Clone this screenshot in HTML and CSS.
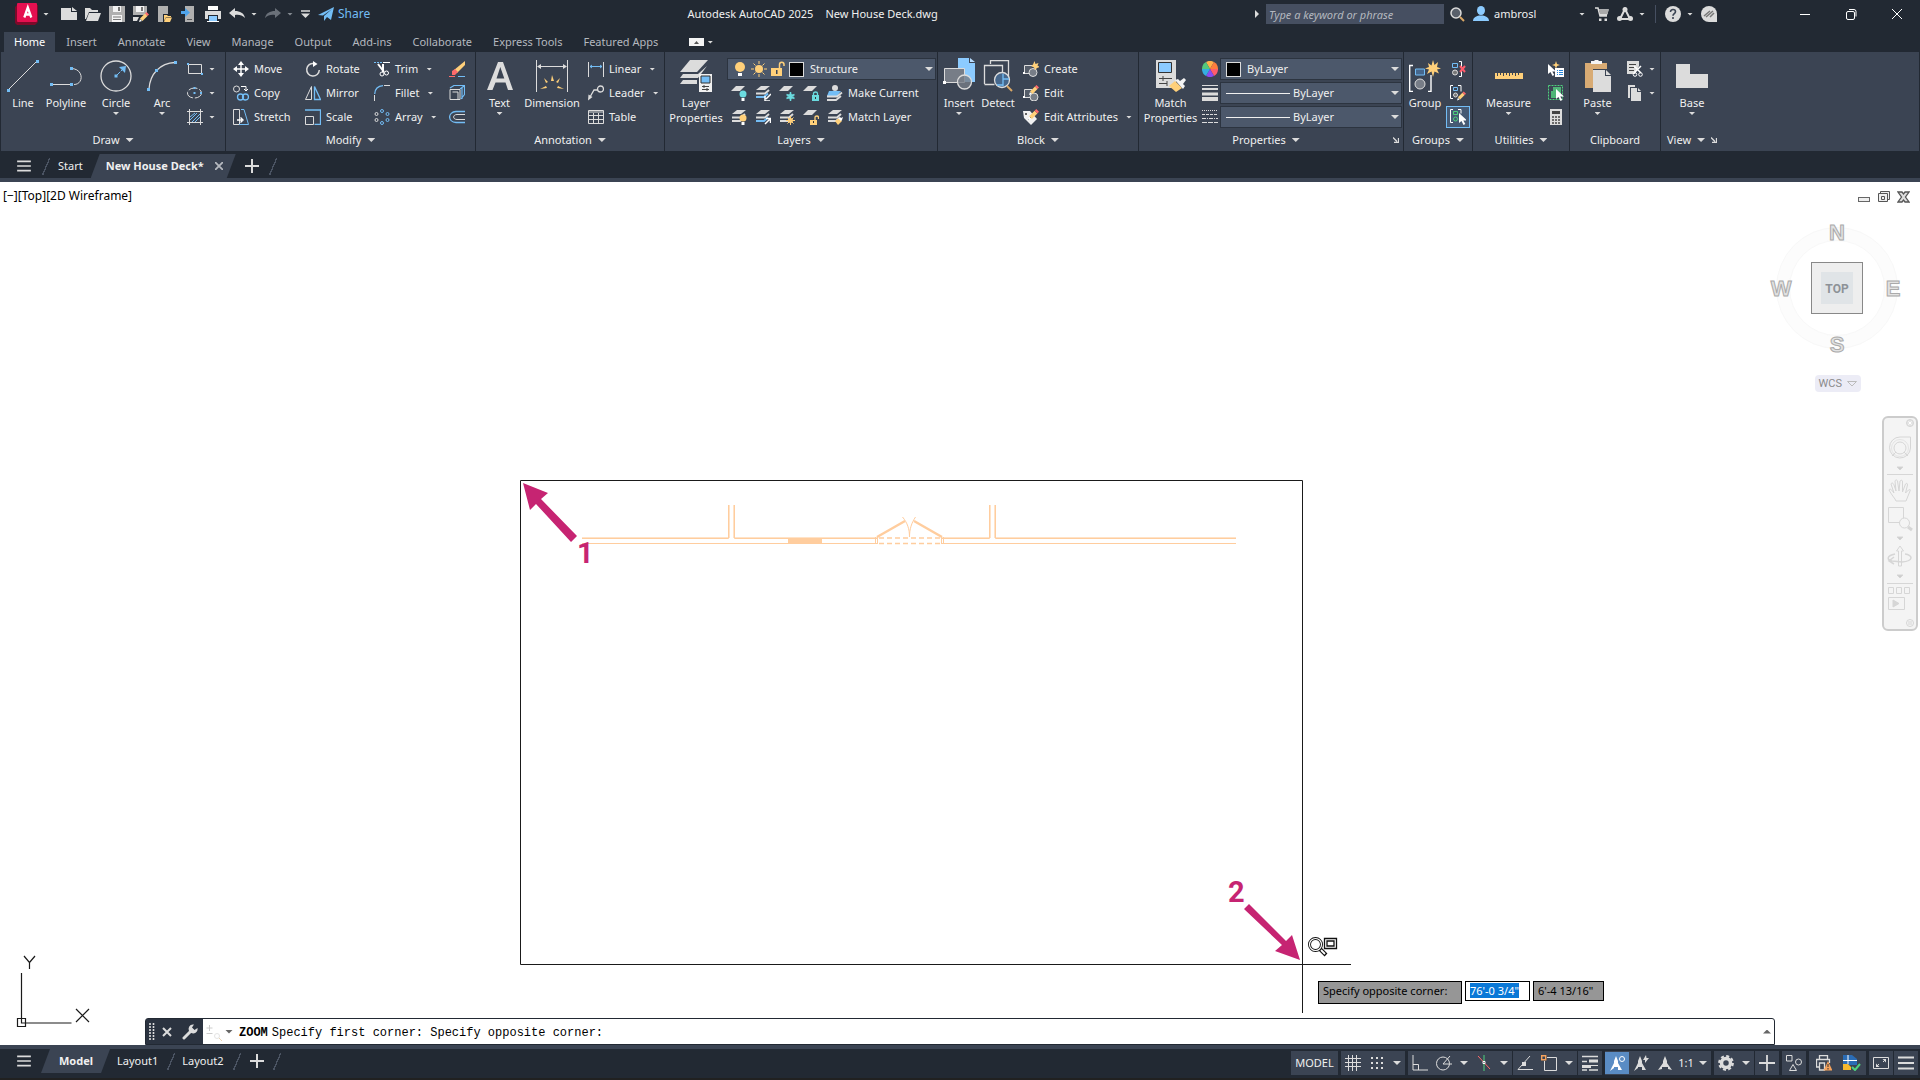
FILE: index.html
```html
<!DOCTYPE html>
<html lang="en">
<head>
    <meta charset="UTF-8">
    <meta name="viewport" content="width=device-width, initial-scale=1.0">
    <title>Autodesk AutoCAD 2025 - New House Deck.dwg</title>
    <link rel="stylesheet" href="styles.css">
</head>
<body>
    <!-- Shared icon parts -->
    <svg class="defs" aria-hidden="true">
        <symbol id="menu" viewBox="0 0 16 14"><path d="M0 1.5h16M0 7h16M0 12.5h16" stroke="#dcdcdc" stroke-width="2"/></symbol>
        <symbol id="plus" viewBox="0 0 14 14"><path d="M7 0v14M0 7h14" stroke="#dcdcdc" stroke-width="2"/></symbol>
        <symbol id="sheets" viewBox="0 0 16 16">
            <path d="M6 1h9l-5 4H1z" fill="#dcdcdc"/>
            <path d="M1 8.5h9l4-3.5" fill="none" stroke="#dcdcdc" stroke-width="2"/>
            <path d="M1 12h8l3-2.5" fill="none" stroke="#dcdcdc" stroke-width="2"/>
        </symbol>
        <symbol id="sheets-blue" viewBox="0 0 16 16">
            <path d="M6 1h9l-5 4H1z" fill="#dcdcdc"/>
            <path d="M1 8.5h9l4-3.5" fill="none" stroke="#dcdcdc" stroke-width="2"/>
            <path d="M1 12h8l4-3.5" fill="none" stroke="#73bdf5" stroke-width="2"/>
        </symbol>
        <symbol id="sheet" viewBox="0 0 16 16"><path d="M5 1h9L9 6H0z" fill="#dcdcdc"/></symbol>
        <symbol id="pencil" viewBox="0 0 10 10"><path d="M0 10l1-3 2 2z" fill="#fff"/><path d="M1 6.5l5-5 2.500 2.500-5 5z" fill="#ffd07a"/><path d="M6 1.5L7.5 0 10 2.5 8.5 4z" fill="#ff6b6b"/></symbol>
        <symbol id="cursor" viewBox="0 0 8 12"><path d="M0 0v10l2.5-2 2 4 1.8-1-2-3.5H8z" fill="#fff"/></symbol>
        <symbol id="launch" viewBox="0 0 6 6"><path d="M0 .5l4 4M5.5 1v4.5H1" stroke="#dcdcdc" stroke-width="1.3" fill="none"/></symbol>
    </svg>

    <!-- Title bar -->
    <header class="titlebar">
        <div class="quick-access">
            <button class="app-button" aria-label="Application menu">
                <svg width="24" height="22" viewBox="0 0 24 22"><path d="M3 1l20 1v17l-3 3H2l-2-2V4z" fill="#7d0a2a"/><rect x="2" y="0" width="20" height="19" rx="1" fill="#e51050"/><path d="M9.3 14.5L12.8 4.500l3.500 10M10.500 11.500h4.600" fill="none" stroke="#fff" stroke-width="2.300"/></svg>
                <i class="caret"></i>
            </button>
            <button aria-label="New"><svg width="16" height="16"><path d="M0 2h10v4h6v8H0z" fill="#dcdcdc"/><path d="M11 1l5 4h-5z" fill="#dcdcdc"/></svg></button>
            <button aria-label="Open"><svg width="16" height="16"><path d="M0 2h5l2 2h6v2H4l-3 7H0z" fill="#dcdcdc"/><path d="M4 7h12l-3 8H1z" fill="#dcdcdc"/></svg></button>
            <button aria-label="Save"><svg width="16" height="16"><path d="M0 0h16v16H0z" fill="#b0b0b0"/><path d="M4 0h8v6H4zM3 9h10v7H3z" fill="#f4f4f4"/><path d="M9 1h2v4H9z" fill="#777"/><path d="M4 11h8M4 13.5h8" stroke="#777"/></svg></button>
            <button aria-label="Save as"><svg width="16" height="16"><path d="M0 0h14v9H0z" fill="#b0b0b0"/><path d="M3 0h8v6H3z" fill="#f4f4f4"/><path d="M8 1h2v4H8z" fill="#777"/><path d="M0 11h6l-2 4H0z" fill="#dcdcdc"/><use href="#pencil" x="6" y="6" width="10" height="10"/></svg></button>
            <button aria-label="Open from web"><svg width="16" height="16"><path d="M1 0h10v8H6v8H1z" fill="#b0b0b0"/><path d="M7 9h3l1 1h3v1H9l-2 4zM9 11.5h6L13 16H7z" fill="#ffd07a"/></svg></button>
            <button aria-label="Save to web"><svg width="16" height="16"><path d="M4 0h9v16H4z" fill="#b0b0b0"/><path d="M6 13h5v1H6z" fill="#555"/><path d="M0 5h4V2l5 4.5L4 11V8H0z" fill="#4ea3ea"/></svg></button>
            <button aria-label="Plot"><svg width="16" height="16"><path d="M3 0h10v4H3z" fill="#fff"/><path d="M0 5h16v8h-3V9H3v4H0z" fill="#dcdcdc"/><path d="M4 10h8v6H4z" fill="#8ccbff"/><path d="M2 15h12v1H2z" fill="#fff"/></svg></button>
            <button class="with-caret" aria-label="Undo"><svg width="16" height="16"><path d="M0 7l6-5v3c5 0 9 2 10 7-3-3-6-3.5-10-3v3z" fill="#dcdcdc"/></svg><i class="caret"></i></button>
            <button class="with-caret dim" aria-label="Redo"><svg width="16" height="16"><path d="M16 7l-6-5v3C5 5 1 7 0 12c3-3 6-3.5 10-3v3z" fill="#6a7079"/></svg><i class="caret"></i></button>
            <button aria-label="Customize"><svg width="9" height="8"><path d="M0 1h9" stroke="#dcdcdc" stroke-width="1.5"/><path d="M0 3.5h9L4.5 8z" fill="#dcdcdc"/></svg></button>
            <button class="share"><svg width="16" height="14"><path d="M0 8L16 0l-3 13-4-3-3 4V9l8-7-9 6.5z" fill="#73bdf5"/></svg>Share</button>
        </div>
        <h1 class="app-title"><span>Autodesk AutoCAD 2025</span><span>New House Deck.dwg</span></h1>
        <div class="info-center">
            <i class="caret-right"></i>
            <input type="text" placeholder="Type a keyword or phrase" aria-label="Search help">
            <button aria-label="Search"><svg width="15" height="15"><circle cx="6" cy="6" r="5" fill="#59606b" stroke="#dcdcdc" stroke-width="1.5"/><path d="M10 10l4 4" stroke="#d9a766" stroke-width="2"/></svg></button>
            <button class="user"><svg width="16" height="16"><ellipse cx="8" cy="4.5" rx="4" ry="4.5" fill="#8ccbff"/><path d="M0 15c0-4 4-5 6-5.5h4c2 .5 6 1.5 6 5.5z" fill="#8ccbff"/></svg>ambrosl<i class="caret"></i></button>
            <button aria-label="App store"><svg width="14" height="14"><path d="M0 1h3l2 8h7M4 3h9l-1.5 4.5H5" fill="none" stroke="#dcdcdc" stroke-width="1.5"/><path d="M4 3h9v4H5z" fill="#aaa"/><path d="M4 11.5h2.5V14H4zM9.5 11.5H12V14H9.5z" fill="#dcdcdc"/></svg></button>
            <button class="with-caret" aria-label="Autodesk apps"><svg width="16" height="14"><path d="M8 2L3 12h10z" fill="none" stroke="#dcdcdc" stroke-width="2"/><circle cx="8" cy="2.5" r="2.5" fill="#dcdcdc"/><circle cx="2.5" cy="11.5" r="2.5" fill="#dcdcdc"/><circle cx="13.5" cy="11.5" r="2.5" fill="#dcdcdc"/></svg><i class="caret"></i></button>
            <span class="divider"></span>
            <button class="with-caret" aria-label="Help"><svg width="16" height="16"><circle cx="8" cy="8" r="8" fill="#dcdcdc"/><path d="M5.5 6c0-3.5 5-3 5-.3 0 1.8-2.5 2-2.5 4M8 11v2" fill="none" stroke="#3b4453" stroke-width="1.6"/></svg><i class="caret"></i></button>
            <button aria-label="Autodesk"><svg width="16" height="16"><path d="M8 0a8 8 0 0 1 8 8v8H8A8 8 0 0 1 8 0z" fill="#dcdcdc"/><path d="M3 10l6-5M5 11l7-6M9 11l4-4" stroke="#777" stroke-width="1.5"/></svg></button>
        </div>
        <div class="window-buttons">
            <button aria-label="Minimize"><svg width="10" height="10"><path d="M0 5.5h10" stroke="#fff"/></svg></button>
            <button aria-label="Restore"><svg width="11" height="11" fill="none" stroke="#fff"><rect x=".5" y="2.5" width="8" height="8" rx="1.5"/><path d="M3 .5h5a2 2 0 0 1 2 2v5"/></svg></button>
            <button aria-label="Close"><svg width="10" height="10"><path d="M0 0l10 10M10 0L0 10" stroke="#fff"/></svg></button>
        </div>
    </header>

    <!-- Ribbon tabs -->
    <nav class="ribbon-tabs">
        <a href="#" class="active">Home</a>
        <a href="#">Insert</a>
        <a href="#">Annotate</a>
        <a href="#">View</a>
        <a href="#">Manage</a>
        <a href="#">Output</a>
        <a href="#">Add-ins</a>
        <a href="#">Collaborate</a>
        <a href="#">Express Tools</a>
        <a href="#">Featured Apps</a>
        <button aria-label="Minimize ribbon"><svg width="15" height="8"><path d="M0 0h15v8H0z" fill="#f4f4f4"/><path d="M5 6l2.5-3L10 6z" fill="#555"/></svg><i class="caret"></i></button>
    </nav>

    <!-- Ribbon -->
    <section class="ribbon">
        <div class="panel draw">
            <div class="panel-body">
                <button class="big"><svg width="32" height="32"><path d="M2 29L29 2" stroke="#dcdcdc" fill="none"/><path d="M0 29h3v3H0zM29 0h3v3h-3z" fill="#73bdf5"/></svg>Line</button>
                <button class="big"><svg width="32" height="32" fill="none"><path d="M2 24.5h19M21 8.500c13 0 13 16 3 16" stroke="#dcdcdc"/><path d="M0 23h3v3H0zM20 23h3v3h-3zM20 7h3v3h-3z" fill="#73bdf5"/></svg>Polyline</button>
                <button class="big"><svg width="32" height="32" fill="none"><circle cx="16" cy="16" r="15" stroke="#dcdcdc" stroke-width="1.3"/><path d="M16 16l8-8" stroke="#73bdf5" stroke-dasharray="6 1"/><path d="M19 7l7-1-1 7z" fill="#73bdf5"/><path d="M14.5 14.5h3v3h-3z" fill="#73bdf5"/></svg>Circle<i class="caret"></i></button>
                <button class="big"><svg width="32" height="32" fill="none"><path d="M3 29C4 14 14 3 29 2.5" stroke="#dcdcdc" stroke-width="1.3"/><path d="M1 28h3v3H1zM9 9h3v3H9zM28 1h3v3h-3z" fill="#73bdf5"/></svg>Arc<i class="caret"></i></button>
                <div class="rows">
                    <button aria-label="Rectangle"><svg width="16" height="16" fill="none"><path d="M1.5 3.5h13v9h-13z" stroke="#dcdcdc"/><path d="M0 2h2v2H0zM14 12h2v2h-2z" fill="#73bdf5"/></svg><i class="caret"></i></button>
                    <button aria-label="Ellipse"><svg width="16" height="16" fill="none"><ellipse cx="7.5" cy="8" rx="7" ry="5" stroke="#dcdcdc" stroke-dasharray="9 2"/><path d="M6.5 7h2v2h-2zM13 7h2v2h-2zM6.5 2h2v2h-2z" fill="#73bdf5"/></svg><i class="caret"></i></button>
                    <button aria-label="Hatch"><svg width="16" height="16" fill="none"><path d="M3 11l7-7M3 8l5-4M5 13l8-8M8 13l5-5" stroke="#73bdf5"/><path d="M2.5 0v16M13.5 0v16M0 2.5h16M0 13.5h16" stroke="#dcdcdc"/></svg><i class="caret"></i></button>
                </div>
            </div>
            <button class="panel-title">Draw<i class="caret wide"></i></button>
        </div>

        <div class="panel modify">
            <div class="panel-body">
                <div class="rows">
                    <button><svg width="16" height="16" fill="#fff"><path d="M7.3 2h1.4v12H7.3zM2 7.3h12v1.4H2z"/><path d="M8 0l3 4H5zM8 16l3-4H5zM0 8l4-3v6zM16 8l-4-3v6z"/></svg>Move</button>
                    <button><svg width="16" height="16" fill="none"><circle cx="3.5" cy="4" r="3" stroke="#dcdcdc"/><path d="M8 1.5h5v4M11 4l2 2 2-2" stroke="#fff"/><circle cx="7.5" cy="12" r="3" stroke="#73bdf5" stroke-width="1.3"/><circle cx="12.5" cy="12" r="3" stroke="#73bdf5" stroke-width="1.3"/></svg>Copy</button>
                    <button><svg width="16" height="16" fill="none"><path d="M.5.5h6v15h-6z" stroke="#dcdcdc"/><path d="M8 .5h3l4.500 15H6" stroke="#73bdf5"/><path d="M4 11h5M7.5 8.5L10 11l-2.5 2.5" stroke="#fff" stroke-width="1.4"/></svg>Stretch</button>
                </div>
                <div class="rows">
                    <button><svg width="16" height="16" fill="none"><path d="M9 2.5A6.3 6.3 0 1 0 14.3 9" stroke="#dcdcdc" stroke-width="1.5"/><path d="M8 0l4.5 3L8 6z" fill="#fff"/></svg>Rotate</button>
                    <button><svg width="16" height="16" fill="none"><path d="M6.5 1.5v13h-6z" stroke="#dcdcdc"/><path d="M9.5 1.5v13h6z" stroke="#73bdf5" stroke-width="1.3"/></svg>Mirror</button>
                    <button><svg width="16" height="16" fill="none"><path d="M0 1h15.500v14.500h-6" stroke="#73bdf5" stroke-width="1.3"/><path d="M.5 7.5h8v8h-8z" stroke="#dcdcdc"/></svg>Scale</button>
                </div>
                <div class="rows">
                    <button><svg width="16" height="16" fill="none"><path d="M0 1.5h8" stroke="#73bdf5" stroke-dasharray="2 1"/><path d="M9 1.5h7" stroke="#fff"/><path d="M4 3l6 8M9 3v8" stroke="#fff" stroke-width="2"/><circle cx="8" cy="13" r="2" stroke="#fff"/><circle cx="12.5" cy="12" r="2" stroke="#fff"/></svg>Trim<i class="caret"></i></button>
                    <button><svg width="16" height="16" fill="none"><path d="M.7 9C1 4 4 1 9 .7" stroke="#73bdf5" stroke-width="1.3"/><path d="M.5 10v6M10 .5h6" stroke="#dcdcdc"/></svg>Fillet<i class="caret"></i></button>
                    <button><svg width="16" height="16" fill="none" stroke="#73bdf5"><circle cx="8" cy="2" r="1.5"/><circle cx="13.5" cy="5" r="1.5"/><circle cx="13.5" cy="11" r="1.5"/><circle cx="8" cy="14" r="1.5"/><g stroke="#dcdcdc"><circle cx="2.5" cy="5" r="1.5"/><circle cx="2.5" cy="11" r="1.5"/></g></svg>Array<i class="caret"></i></button>
                </div>
                <div class="rows">
                    <button aria-label="Erase"><svg width="16" height="16" fill="none"><path d="M5 9L16 0v4l-8 8z" fill="#ffd07a"/><path d="M3 10l3-2 3 3-3 3H3z" fill="#ff6b6b"/><path d="M0 15.5h6" stroke="#ff6b6b"/><path d="M9 15.5h7" stroke="#73bdf5"/></svg></button>
                    <button aria-label="Explode"><svg width="16" height="16" fill="none"><path d="M1 4.5h10v10H1zM3.5 7h5.5v7" stroke="#dcdcdc"/><path d="M1 3l4-2.5h10.500v9L12 14M11 4l4-3M13 3v11" stroke="#73bdf5" stroke-width="1.2"/></svg></button>
                    <button aria-label="Offset"><svg width="16" height="16" fill="none"><path d="M16 2.5H7C-1.5 3-1.5 13 7 13.5h9" stroke="#73bdf5" stroke-width="1.3"/><path d="M16 5.5H8c-4.5 0-4.5 5 0 5h8" stroke="#dcdcdc"/></svg></button>
                </div>
            </div>
            <button class="panel-title">Modify<i class="caret wide"></i></button>
        </div>

        <div class="panel annotation">
            <div class="panel-body">
                <button class="big"><svg width="32" height="32"><path d="M14 2h5l10 28h-5l-2.5-7.5H11.5L8.5 30H3zm2.3 5L12.5 18.5h7.800z" fill="#dcdcdc"/></svg>Text<i class="caret"></i></button>
                <button class="big"><svg width="32" height="32" fill="none"><path d="M.5 0v32M31.5 0v32M2 6.5h28" stroke="#dcdcdc"/><path d="M1 6.5L5 4v5zM31 6.5L27 4v5z" fill="#dcdcdc"/><path d="M16 15l2 6h-3zM8 18l4 4-2 1zM24 18l-4 4 2 1zM4 29l6-3 1 2zM28 29l-6-3-1 2z" fill="#ffd07a"/></svg>Dimension</button>
                <div class="rows">
                    <button><svg width="16" height="16" fill="none"><path d="M.5 1v15M15.5 1v15" stroke="#dcdcdc"/><path d="M2 5.5h12M4 4L2 5.5 4 7M12 4l2 1.5L12 7" stroke="#73bdf5"/></svg>Linear<i class="caret"></i></button>
                    <button><svg width="16" height="16" fill="none"><circle cx="12.5" cy="4" r="3" stroke="#dcdcdc" stroke-width="1.3"/><path d="M9.500 5L6 5 2 12" stroke="#dcdcdc" stroke-width="1.3"/><path d="M0 15.5l.5-6 4 2.5z" fill="#dcdcdc"/></svg>Leader<i class="caret"></i></button>
                    <button><svg width="16" height="16" fill="none"><path d="M.5 1.5h15v13H.5zM.5 3h15M.5 6.5h15M.5 10.5h15M5.5 4v11M10.5 4v11" stroke="#dcdcdc"/></svg>Table</button>
                </div>
            </div>
            <button class="panel-title">Annotation<i class="caret wide"></i></button>
        </div>

        <div class="panel layers">
            <div class="panel-body">
                <button class="big"><svg width="32" height="32"><path d="M10 0h18L17 12H0z" fill="#dcdcdc"/><path d="M0 18l3-4h15l9-8-9 12zM0 24l3-4h14v4z" fill="#dcdcdc"/><path d="M19 14h13v18H19z" fill="#f0f0f0"/><path d="M21 16h9v7h-9z" fill="#73bdf5" stroke="#333"/><path d="M22 26.5h7M22 29.5h7M24 25v3M27 28v3" stroke="#444"/></svg>Layer<br>Properties</button>
                <div class="rows">
                    <div class="combo">
                        <svg width="14" height="16"><circle cx="7" cy="6" r="5" fill="#ffd07a"/><path d="M5 12h4v3H5z" fill="#fff"/></svg>
                        <svg width="16" height="16"><circle cx="8" cy="8" r="4" fill="#ffd07a"/><path d="M8 0v3M8 13v3M0 8h3M13 8h3M2.5 2.5l2 2M11.5 11.5l2 2M2.5 13.5l2-2M11.5 4.5l2-2" stroke="#ffd07a"/></svg>
                        <svg width="14" height="16"><path d="M0 7h11v8H0z" fill="#ffd07a"/><path d="M8.5 7V3.5c0-3 4.500-3 4.500 0V5" stroke="#ffd07a" stroke-width="1.5" fill="none"/><path d="M5 9h1.500v4H5z" fill="#3b4453"/></svg>
                        <i class="swatch"></i>
                        <select aria-label="Layer"><option>Structure</option></select>
                        <i class="caret wide"></i>
                    </div>
                    <div class="icon-row">
                        <button aria-label="Off"><svg width="16" height="16"><use href="#sheet" width="16" height="16"/><circle cx="12" cy="9" r="3.5" fill="#6bdbe0"/><path d="M10.5 13h3v3h-3z" fill="#fff"/></svg></button>
                        <button aria-label="Isolate"><svg width="16" height="16"><use href="#sheets-blue" width="16" height="16"/><path d="M16 9l-5 5M10 11v5h5" stroke="#fff" stroke-width="1.5" fill="none"/></svg></button>
                        <button aria-label="Freeze"><svg width="16" height="16"><use href="#sheet" width="16" height="16"/><path d="M11.5 7v9M7.5 9.5l8 4M15.5 9.5l-8 4" stroke="#6bdbe0" stroke-width="1.5"/><circle cx="11.5" cy="11.5" r="2.5" fill="none" stroke="#6bdbe0"/></svg></button>
                        <button aria-label="Lock"><svg width="16" height="16"><use href="#sheet" width="16" height="16"/><path d="M9 10h7v6H9z" fill="#6bdbe0"/><path d="M10.5 10V8.5c0-2 4-2 4 0V10" fill="none" stroke="#6bdbe0" stroke-width="1.3"/><path d="M12 12h1v2h-1z" fill="#333"/></svg></button>
                        <button><svg width="16" height="16"><path d="M2 6h12l-4 5H0z" fill="#73bdf5"/><path d="M0 11.5h10l5-4M0 15h9l5-4" fill="none" stroke="#dcdcdc" stroke-width="1.8"/><circle cx="8" cy="3" r="3" fill="#dcdcdc"/></svg>Make Current</button>
                    </div>
                    <div class="icon-row">
                        <button aria-label="Turn all on"><svg width="16" height="16"><use href="#sheets" width="16" height="16"/><circle cx="12" cy="9" r="3.5" fill="#ffd07a"/><path d="M10.5 13h3v3h-3z" fill="#fff"/></svg></button>
                        <button aria-label="Unisolate"><svg width="16" height="16"><use href="#sheets-blue" width="16" height="16"/><path d="M10 15l5-5M11 9.5h4.5V14" stroke="#fff" stroke-width="1.5" fill="none"/></svg></button>
                        <button aria-label="Thaw all"><svg width="16" height="16"><use href="#sheets" width="16" height="16"/><circle cx="11.5" cy="11.5" r="2.5" fill="#ffd07a"/><path d="M11.5 7v9M7 11.5h9M8.5 8.5l6 6M14.5 8.5l-6 6" stroke="#ffd07a"/></svg></button>
                        <button aria-label="Unlock"><svg width="16" height="16"><use href="#sheet" width="16" height="16"/><path d="M7 11h7v5H7z" fill="#ffd07a"/><path d="M12 11V8.5c0-2 3.500-2 3.500 0V10" fill="none" stroke="#ffd07a" stroke-width="1.3"/><path d="M10 12h1v2h-1z" fill="#333"/></svg></button>
                        <button><svg width="16" height="16"><use href="#sheets" width="16" height="16"/><path d="M8 12l4-3 3 3-4 4z" fill="#ffd07a"/><path d="M11 9l2-1 1 1 2-1-1 3-1 1z" fill="#fff"/></svg>Match Layer</button>
                    </div>
                </div>
            </div>
            <button class="panel-title">Layers<i class="caret wide"></i></button>
        </div>

        <div class="panel block">
            <div class="panel-body">
                <button class="big"><svg width="32" height="34" viewBox="0 -2 32 34"><path d="M15-2h11v5h6v19H15z" fill="#8ccbff"/><path d="M27-2l5 4h-5z" fill="#b8ddff"/><path d="M1.5 8.5h20v14h-20z" fill="#777d87" stroke="#dcdcdc"/><circle cx="21.5" cy="22" r="7" fill="#777d87" fill-opacity=".8" stroke="#dcdcdc" stroke-width="1.3"/><path d="M0 21h3v3H0z" fill="#fff"/></svg>Insert<i class="caret"></i></button>
                <button class="big"><svg width="32" height="32" fill="none"><path d="M8.5 4V.5h18V18M2.5 24V5.5h18V12M2.5 24.5h10" stroke="#dcdcdc" stroke-width="1.3"/><circle cx="20" cy="20" r="7.5" fill="#46678c" stroke="#dcdcdc" stroke-width="1.3"/><path d="M21 14v12M15 25h6M21 19h6" stroke="#73bdf5" stroke-width="1.3"/><path d="M25 26l5 5" stroke="#d9a766" stroke-width="2"/></svg>Detect</button>
                <div class="rows">
                    <button><svg width="16" height="16" fill="none"><path d="M9 4.5H1.5v8h6" fill="#555d69" stroke="#dcdcdc"/><circle cx="10" cy="11.5" r="4" fill="#777d87" stroke="#dcdcdc"/><path d="M0 11h2v2H0z" fill="#fff"/><path d="M11.5 0l1 3 3-1-1 2.5L17 6l-3 1-2 2-1-2.5L8 5l2-1.5z" fill="#ffd07a"/></svg>Create</button>
                    <button><svg width="16" height="16" fill="none"><path d="M9 4.5H1.5v8h6" fill="#555d69" stroke="#dcdcdc"/><circle cx="11" cy="12" r="4" fill="#777d87" stroke="#dcdcdc"/><path d="M0 11h2v2H0z" fill="#fff"/><use href="#pencil" x="6" y="0" width="10" height="10"/></svg>Edit</button>
                    <button><svg width="16" height="16"><path d="M0 2h7l7 8-6 6-7-7z" fill="#f0f0f0"/><circle cx="3" cy="5" r="1" fill="#333"/><path d="M5 11l3-3" stroke="#333"/><use href="#pencil" x="5" y="0" width="11" height="11"/></svg>Edit Attributes<i class="caret"></i></button>
                </div>
            </div>
            <button class="panel-title">Block<i class="caret wide"></i></button>
        </div>

        <div class="panel properties">
            <div class="panel-body">
                <button class="big"><svg width="32" height="32"><path d="M1 0h20v28H1z" fill="#dcdcdc"/><path d="M3.5 2.5h13v10h-13z" fill="#8ccbff" stroke="#333"/><path d="M4 18.5h13M4 23.5h8M8 16v5M12 21v5" stroke="#444"/><path d="M14 26l6-5 7 7-6 4z" fill="#ffd07a"/><path d="M20 20l3-1 2 2 4-3 2 2-3 4 2 2-2 3z" fill="#f4f4f4"/></svg>Match<br>Properties</button>
                <div class="rows">
                    <div class="prop-row">
                        <svg width="16" height="16"><path d="M8 8L4 1a8 8 0 0 1 8 0z" fill="#ffb14a"/><path d="M8 8l4-7a8 8 0 0 1 4 7z" fill="#ff7d3c"/><path d="M8 8h8a8 8 0 0 1-4 7z" fill="#ff5c6c"/><path d="M8 8l4 7a8 8 0 0 1-8 0z" fill="#8a4cf0"/><path d="M8 8l-4 7a8 8 0 0 1-4-7z" fill="#35aee0"/><path d="M8 8H0a8 8 0 0 1 4-7z" fill="#54c97c"/></svg>
                        <div class="combo"><i class="swatch"></i><select aria-label="Object color"><option>ByLayer</option></select><i class="caret wide"></i></div>
                    </div>
                    <div class="prop-row">
                        <svg width="16" height="16"><path d="M0 .5h16" stroke="#dcdcdc"/><path d="M0 4h16" stroke="#dcdcdc" stroke-width="2"/><path d="M0 9h16" stroke="#dcdcdc" stroke-width="3"/><path d="M0 14h16" stroke="#dcdcdc" stroke-width="4"/></svg>
                        <div class="combo"><i class="sample"></i><select aria-label="Lineweight"><option>ByLayer</option></select><i class="caret wide"></i></div>
                    </div>
                    <div class="prop-row">
                        <svg width="16" height="16" stroke="#dcdcdc"><path d="M0 1.5h16" stroke-dasharray="1 1"/><path d="M0 5.5h16" stroke-dasharray="3 1"/><path d="M0 9.5h16" stroke-dasharray="4 1 1 1"/><path d="M0 13.5h16" stroke-dasharray="5 1"/></svg>
                        <div class="combo"><i class="sample"></i><select aria-label="Linetype"><option>ByLayer</option></select><i class="caret wide"></i></div>
                    </div>
                </div>
            </div>
            <div class="title-row">
                <button class="panel-title">Properties<i class="caret wide"></i></button>
                <button class="launcher" aria-label="Properties palette"><svg width="6" height="6"><use href="#launch"/></svg></button>
            </div>
        </div>

        <div class="panel groups">
            <div class="panel-body">
                <button class="big"><svg width="32" height="32" fill="none"><path d="M4 5.5H.7v26H4M19 31.5h3V15" stroke="#fff" stroke-width="1.4"/><path d="M6.5 9h9v6h-9z" fill="#46678c" stroke="#73bdf5"/><circle cx="11" cy="24" r="5" fill="#777d87" stroke="#dcdcdc"/><path d="M24 0l1.500 5L29 2l-1 5 4 1.5-4 1 2 4-4.5-2L24 17l-1.5-5.5L18 14l2-4.500-4-1 4-1.500-1-4 3.500 2.500z" fill="#ffd07a"/></svg>Group</button>
                <div class="rows">
                    <button aria-label="Ungroup"><svg width="16" height="16" fill="none"><path d="M2.5 2.5h5v4h-5z" stroke="#73bdf5"/><circle cx="5" cy="11.5" r="2.5" fill="#777" stroke="#dcdcdc"/><path d="M9 .5h2.500v15H9" stroke="#fff"/><path d="M10 5l5 6M15 5l-5 6" stroke="#ff5c6c" stroke-width="2"/></svg></button>
                    <button aria-label="Group edit"><svg width="16" height="16" fill="none"><path d="M3 .5H.5v13H3M8 .5h3v6" stroke="#fff"/><path d="M3.5 2.5h4v3h-4z" stroke="#73bdf5"/><circle cx="5.5" cy="10" r="2" fill="#777" stroke="#dcdcdc"/><use href="#pencil" x="7" y="6" width="9" height="10"/></svg></button>
                    <button class="pressed" aria-label="Group selection on/off"><svg width="16" height="16" fill="none"><path d="M3 .5H.5v13H3M8 .5h3v4" stroke="#fff"/><path d="M3.5 2.5h4v3h-4z" stroke="#4fd07d"/><circle cx="5.5" cy="10" r="2" stroke="#4fd07d"/><use href="#cursor" x="9" y="4" width="8" height="12"/></svg></button>
                </div>
            </div>
            <button class="panel-title">Groups<i class="caret wide"></i></button>
        </div>

        <div class="panel utilities">
            <div class="panel-body">
                <button class="big"><svg width="32" height="32"><path d="M2 13h28v6H2z" fill="#ffd07a"/><path d="M4.5 13v3M7.5 13v2M10.5 13v3M13.5 13v2M16.5 13v3M19.5 13v2M22.5 13v3M25.5 13v2" stroke="#3b4453"/></svg>Measure<i class="caret"></i></button>
                <div class="rows">
                    <button aria-label="Quick select"><svg width="16" height="16"><use href="#cursor" x="0" y="3" width="8" height="12"/><path d="M8 0l1 3 3 1-3 1-1 3-1-3-3-1 3-1z" fill="#ffd07a"/><path d="M7 7h9v9H7z" fill="#fff"/><path d="M9 9.5h1M11 9.5h4M9 11.5h1M11 11.5h4M9 13.5h1M11 13.5h4" stroke="#2a86d8"/></svg></button>
                    <button aria-label="Select all"><svg width="16" height="16" fill="none"><path d="M.5.5h14v14H.5z" stroke="#4fd07d" stroke-dasharray="2 1"/><path d="M5 2h8v7H9v4H3V6h2z" fill="#4fb577"/><use href="#cursor" x="8" y="4" width="8" height="12"/></svg></button>
                    <button aria-label="Calculator"><svg width="12" height="16"><path d="M0 0h12v16H0z" fill="#dcdcdc"/><path d="M2 2h8v3H2z" fill="#444"/><path d="M2 8h8M2 11h8M2 14h8" stroke="#444" stroke-width="1.5" stroke-dasharray="2 1"/></svg></button>
                </div>
            </div>
            <button class="panel-title">Utilities<i class="caret wide"></i></button>
        </div>

        <div class="panel clipboard">
            <div class="panel-body">
                <button class="big"><svg width="32" height="32"><path d="M3 3h22v6H11v19H3z" fill="#d8ab74"/><path d="M9 1h3l1-1h3l1 1h3v3H9z" fill="#f4f4f4"/><path d="M11 10h12v6h6v16H11z" fill="#dcdcdc"/><path d="M24 10l5 5h-5z" fill="#dcdcdc"/></svg>Paste<i class="caret"></i></button>
                <div class="rows">
                    <button aria-label="Cut"><svg width="16" height="16" fill="none"><path d="M0 0h12v5l-4 8H0z" fill="#dcdcdc"/><path d="M2 3.5h7M2 6.5h5M2 9.5h5" stroke="#444"/><path d="M7 5l7 7M14 5l-7 7" stroke="#fff" stroke-width="1.5"/><circle cx="8" cy="13.5" r="1.8" stroke="#fff"/><circle cx="13.5" cy="13.5" r="1.8" stroke="#fff"/></svg><i class="caret"></i></button>
                    <button aria-label="Copy clip"><svg width="16" height="16"><path d="M1 0h7v2H3v11H1z" fill="#dcdcdc"/><path d="M4 3h6v4h4v9H4z" fill="#dcdcdc"/><path d="M11 3l3 3h-3z" fill="#dcdcdc"/></svg><i class="caret"></i></button>
                </div>
            </div>
            <div class="panel-title">Clipboard</div>
        </div>

        <div class="panel view">
            <div class="panel-body">
                <button class="big"><svg width="32" height="32"><path d="M0 4h14v10h18v14H0z" fill="#dcdcdc"/></svg>Base<i class="caret"></i></button>
            </div>
            <div class="title-row">
                <button class="panel-title">View<i class="caret wide"></i></button>
                <button class="launcher" aria-label="View settings"><svg width="6" height="6"><use href="#launch"/></svg></button>
            </div>
        </div>
    </section>

    <!-- Drawing file tabs -->
    <nav class="file-tabs">
        <button aria-label="File tab menu"><svg width="16" height="12"><use href="#menu" width="16" height="12"/></svg></button>
        <i class="slash"></i>
        <a href="#">Start</a>
        <a href="#" class="active">New House Deck*<svg width="8" height="8"><path d="M0 0l8 8M8 0L0 8" stroke="#b5b9bf" stroke-width="1.8"/></svg></a>
        <button class="add" aria-label="New drawing"><svg width="14" height="14"><use href="#plus"/></svg></button>
        <i class="slash"></i>
    </nav>

    <!-- Drawing area -->
    <main class="canvas">
        <svg class="drawing" viewBox="0 182 1920 863" fill="none">
            <!-- Wall and door -->
            <g stroke="#ffcd9e">
                <path d="M582 537.5h146M735 537.5h142M942 537.5h47M996 537.5h240" stroke="#ffe3c8"/>
                <path d="M729.5 505v33M733.5 505v33M990.500 505v33M994.500 505v33" stroke="#ffe3c8"/>
                <path d="M582 538.5h146.500V505M734.5 505v33.5H877M942 538.5h47.500V505M995.5 505v33.5H1236"/>
                <path d="M582 543.5h295M942 543.5h294"/>
                <path d="M879 538h62M879 543.5h62" stroke-width="1.500" stroke-dasharray="5 3"/>
                <path d="M788.5 538v6M821.5 538v6M875.5 537v7M877.5 537v7M941.5 537v7M943.5 537v7"/>
                <path d="M788 541h33" stroke-width="4"/>
                <path d="M877 537l28-16M942 537l-28-16" stroke-width="2.5"/>
                <path d="M902.5 517c5 6 7 12 7 20M915.5 517c-4 6-6 12-6 20"/>
            </g>
            <!-- Zoom window and crosshair -->
            <path d="M520.5 480.5h782v484h-782zM1302.5 916v97M1254 964.5h97" stroke="#1a1a1a"/>
            <!-- Step markers -->
            <g fill="#c62472">
                <path d="M523 483l25 10-7 6 36 37-6 6-35-38-6 6z"/>
                <path d="M1300 960l-25-9 7-6-38-36 5-5 37 37 6-6z"/>
                <text class="marker" x="577" y="563">1</text>
                <text class="marker" x="1228" y="902">2</text>
            </g>
            <!-- Zoom cursor -->
            <g stroke="#111">
                <path d="M1320 949l6 6" stroke-width="4"/>
                <path d="M1321 950l4 4" stroke="#fff" stroke-width="1.8"/>
                <circle cx="1315.5" cy="944.5" r="6" fill="#fff" stroke-width="3"/>
                <circle cx="1315.5" cy="944.5" r="6" stroke="#fff" stroke-width="1.2"/>
                <path d="M1324.5 938.5h12v10h-12zM1327 941h7v5h-7z" fill="#fff" stroke-width="1.3"/>
            </g>
            <!-- UCS icon -->
            <path d="M21.5 973v50h50M17.5 1018.5h8v8h-8zM24 956l5.500 6.500v6.500M35 956l-5.500 6.500M76 1009l13 13M89 1009l-13 13" stroke="#1a1a1a" stroke-width="1.2"/>
        </svg>

        <div class="view-label">[−][Top][2D Wireframe]</div>

        <div class="doc-buttons">
            <button aria-label="Minimize drawing"><svg width="14" height="12"><rect x="1.5" y="6.5" width="11" height="4" fill="#eee" stroke="#666"/></svg></button>
            <button aria-label="Restore drawing"><svg width="14" height="13" fill="#eee" stroke="#555"><path d="M3.5 1.5h9v8h-9z"/><path d="M1.5 3.5h9v8h-9z"/><path d="M4.5 6.5h3v3h-3z"/></svg></button>
            <button aria-label="Close drawing"><svg width="13" height="12"><path d="M1 1h4l1.500 2L8 1h4L8.500 6 12 11H8L6.500 9 5 11H1l3.500-5z" fill="#ddd" stroke="#555" stroke-width="1.300"/></svg></button>
        </div>

        <svg class="viewcube" width="132" height="132">
            <circle cx="66" cy="66" r="54" fill="none" stroke="#fcfcfc" stroke-width="13"/>
            <circle cx="66" cy="66" r="60.5" fill="none" stroke="#f8f8f8"/>
            <circle cx="66" cy="66" r="47.5" fill="none" stroke="#f8f8f8"/>
            <rect x="40.5" y="40.5" width="51" height="51" fill="#eee" stroke="#888"/>
            <rect x="50" y="50" width="32" height="32" fill="#e0e4e7"/>
            <text class="cube-face" x="66" y="71">TOP</text>
            <g class="compass"><text x="66" y="18">N</text><text x="10" y="74">W</text><text x="122" y="74">E</text><text x="66" y="130">S</text></g>
        </svg>
        <button class="wcs">WCS<svg width="10" height="6"><path d="M.5.5h9L5 5z" fill="none" stroke="#bbb"/></svg></button>

        <div class="navbar">
            <svg width="32" height="211" fill="none" stroke="#d6d6d6">
                <circle cx="26" cy="5" r="3.5" fill="#e4e4e4"/><path d="M24.5 3.5l3 3M27.5 3.5l-3 3" stroke="#fff"/>
                <path d="M16 19h10.500v11A10.5 10.5 0 1 1 16 19z"/><circle cx="16" cy="30" r="6"/><circle cx="16" cy="30" r="8.5" stroke="#e4e4e4"/><path d="M8 38l4-4M24 38l-4-4"/>
                <path d="M13 49h6l-3 3z" fill="#ccc"/>
                <path d="M3 56.5h26"/>
                <path d="M11 81c-3-4-5-7-6-9 1-2 3 0 4 2l1 1-3-9c1-2 2-1 3 1l2 6-1-10c1-2 2-1 2.500 0l1.500 10 1-10c1-1 2-1 2.500 0v11l3-8c1-1 2-1 2 1l-2 8 3-3c2-1 2 0 1.500 1L22 83H12z"/>
                <path d="M4.5 89.5h15v15h-15z"/><circle cx="20.5" cy="105" r="5" fill="#f4f4f4"/><path d="M24 109l4 3" stroke-width="3"/>
                <path d="M13 119h6l-3 3z" fill="#ccc"/>
                <path d="M14.5 148v-15h-2l3.500-5 3.500 5h-2v15z"/><path d="M11 136c-9 2-8 6-3 7l10 1c12-1 11-7 3-8M10 139l-5 4 5 3" stroke-width="1.5"/>
                <path d="M13 157h6l-3 3z" fill="#ccc"/>
                <path d="M3 165.5h26"/>
                <path d="M4.5 169.5h5v6h-5zM12.5 169.5h5v6h-5zM20.5 169.5h5v6h-5zM4.5 179.5h16v12h-16z"/><path d="M9 182v7l6-3.5z" fill="#d6d6d6"/>
                <circle cx="26" cy="205" r="3.5"/><path d="M24 204h4M24 206h4"/>
            </svg>
        </div>

        <!-- Dynamic input -->
        <div class="dynamic-input">
            <label for="distance">Specify opposite corner:</label>
            <output class="selected" id="distance"><mark>76'-0 3/4"</mark></output>
            <output class="angle">6'-4 13/16"</output>
        </div>

        <!-- Command line -->
        <div class="command-line">
            <div class="command-tools">
                <svg width="6" height="18"><path d="M1 0v18M4.5 0v18" stroke="#dcdcdc" stroke-width="1.6" stroke-dasharray="2 1"/></svg>
                <button aria-label="Close command line"><svg width="10" height="10"><path d="M1 1l8 8M9 1L1 9" stroke="#dcdcdc" stroke-width="2"/></svg></button>
                <button aria-label="Customize command line"><svg width="16" height="16"><path d="M2 14l8-8" stroke="#dcdcdc" stroke-width="3" stroke-linecap="round"/><path d="M15.5 4A4.5 4.5 0 1 1 12 .5L10 3.5 12.5 6z" fill="#dcdcdc"/></svg></button>
            </div>
            <button class="recent" aria-label="Recent commands"><svg width="18" height="18" fill="none"><path d="M4.5 2v6M1.5 5h6M1.5 10.5h6" stroke="#ccc"/><circle cx="12" cy="13" r="2.5" stroke="#e4e4e4"/><path d="M14 15l3 3" stroke="#ead5b5"/></svg><i class="caret wide gray"></i></button>
            <p><strong>ZOOM</strong><span>Specify first corner: Specify opposite corner:</span></p>
            <button class="history" aria-label="Command history"><i class="caret wide up"></i></button>
        </div>
    </main>

    <!-- Status bar -->
    <footer class="statusbar">
        <nav class="layout-tabs">
            <button aria-label="Layout menu"><svg width="16" height="12"><use href="#menu" width="16" height="12"/></svg></button>
            <a href="#" class="active">Model</a>
            <a href="#">Layout1</a>
            <i class="slash"></i>
            <a href="#">Layout2</a>
            <i class="slash"></i>
            <button class="add" aria-label="New layout"><svg width="14" height="14"><use href="#plus"/></svg></button>
            <i class="slash"></i>
        </nav>
        <div class="status-tools">
            <button class="group space">MODEL</button>
            <div class="group">
                <button aria-label="Grid"><svg width="16" height="16"><path d="M3.5 0v16M7.5 0v16M11.5 0v16M0 3.5h16M0 7.5h16M0 11.5h16" stroke="#dcdcdc"/></svg></button>
                <button aria-label="Snap"><svg width="14" height="14"><path d="M1 2h12M1 7h12M1 12h12" stroke="#dcdcdc" stroke-width="2" stroke-dasharray="2 3"/></svg></button>
                <i class="caret wide"></i>
            </div>
            <div class="group">
                <button aria-label="Ortho"><svg width="16" height="16" fill="none"><path d="M1 0v15h15M1 9.5h5.5V15" stroke="#dcdcdc"/></svg></button>
                <button aria-label="Polar"><svg width="16" height="16" fill="none"><circle cx="7" cy="8.5" r="6.5" stroke="#dcdcdc"/><path d="M7 9h9M7 9l7-8" stroke="#dcdcdc"/></svg></button>
                <i class="caret wide"></i>
                <button aria-label="Isodraft"><svg width="16" height="16" fill="none"><path d="M8 0v16" stroke="#4fd07d"/><path d="M2 1l12 13" stroke="#ff6b6b"/><path d="M7 6.5h2v2H7z" fill="#333" stroke="#fff"/></svg></button>
                <i class="caret wide"></i>
            </div>
            <div class="group joined">
                <button aria-label="Object snap tracking"><svg width="16" height="16" fill="none"><path d="M13 1L1 14.5h15" stroke="#dcdcdc"/><path d="M5 7h4v4H5z" fill="#dcdcdc"/></svg></button>
                <button aria-label="Object snap"><svg width="16" height="16" fill="none"><path d="M6 2.5h9.500v13H3.5V6" stroke="#dcdcdc"/><path d="M.7.7h4v4h-4z" stroke="#f5a25d" stroke-width="1.4"/></svg></button>
                <i class="caret wide"></i>
            </div>
            <div class="group joined">
                <button aria-label="Lineweight"><svg width="16" height="16"><path d="M0 1.5h16M0 6.5h5M0 15h5M7 15h9" stroke="#dcdcdc" stroke-width="1.5"/><path d="M7 6h9M0 11.500h9" stroke="#dcdcdc" stroke-width="3"/><path d="M9 10.500h7" stroke="#dcdcdc"/></svg></button>
            </div>
            <div class="group">
                <button class="on" aria-label="Annotation visibility"><svg width="16" height="16" fill="#fff"><path d="M7 1l2 5v2l4 7H9v-3H5v1l-4 3 4-8V6z"/><circle cx="13" cy="4" r="2.5" fill="none" stroke="#fff"/></svg></button>
                <button aria-label="Auto scale"><svg width="16" height="16" fill="#dcdcdc"><path d="M7 1l2 5v2l4 7H9v-3H5v1l-4 3 4-8V6z"/><path d="M13 0l-3 5h2v3l4-5h-2.5z"/></svg></button>
                <button aria-label="Annotation scale"><svg width="16" height="16" fill="#dcdcdc"><path d="M8 1l2 5v2l5 7-4-1v-2H5v2l-4 1 5-7V6z"/></svg></button>
                <button class="scale">1:1</button>
                <i class="caret wide"></i>
            </div>
            <div class="group">
                <button aria-label="Workspace"><svg width="16" height="16"><circle cx="8" cy="8" r="4.5" fill="none" stroke="#dcdcdc" stroke-width="3.5"/><circle cx="8" cy="8" r="6.8" fill="none" stroke="#dcdcdc" stroke-width="2.2" stroke-dasharray="3 2.34"/></svg></button>
                <i class="caret wide"></i>
            </div>
            <div class="group joined"><button aria-label="Annotation monitor"><svg width="16" height="16"><path d="M8 0v16M0 8h16" stroke="#dcdcdc" stroke-width="1.8"/></svg></button></div>
            <div class="group"><button aria-label="Isolate objects"><svg width="16" height="16" fill="none" stroke="#dcdcdc"><path d="M.5.5h5.500v5.500H.5zM3.5 15.5h7L7 9.5z"/><circle cx="12.500" cy="7" r="3"/></svg></button></div>
            <div class="group plot">
                <button aria-label="Plot details"><svg width="16" height="16" fill="none"><path d="M3.5 4V.5h8V4M3 12H.5V4.5h13V8M3.5 8h5v7h-5z" stroke="#dcdcdc" stroke-width="1.3"/><path d="M12 6l4.500 9.500h-9z" fill="#f5a25d"/><path d="M12 9v3M12 13v1.500" stroke="#333"/></svg></button>
                <button aria-label="Geolocation"><svg width="18" height="16" fill="none"><path d="M0 0h9l5 4v6H0z" fill="#2a6cb5"/><path d="M0 9h5l3 3v3H0z" fill="#f5b82e"/><path d="M0 5.5h14M5 0v9" stroke="#fff"/><path d="M9 12l3 3 5-6" stroke="#4fd07d" stroke-width="2"/></svg></button>
            </div>
            <div class="group"><button aria-label="Clean screen"><svg width="16" height="14" fill="none"><path d="M.5 1.5h15v11H.5z" stroke="#dcdcdc"/><path d="M3 11V7.5L6.5 11zM13 3v3.500L9.5 3z" fill="#dcdcdc"/><path d="M3 11l3-3M13 3l-3 3" stroke="#dcdcdc"/></svg></button></div>
            <div class="group joined"><button aria-label="Customization"><svg width="16" height="14"><use href="#menu" width="16" height="14"/></svg></button></div>
        </div>
    </footer>
</body>
</html>
```
FILE: styles.css
```css
/* Global Styles */
* {
    box-sizing: border-box;
}

body {
    margin: 0;
    min-height: 100vh;
    display: flex;
    flex-direction: column;
    background: #222933;
    color: #f0f0f0;
    font: 11px/14px "Noto Sans", "Open Sans", sans-serif;
    border-bottom: 2px solid #212121;
    overflow: hidden;
}

button {
    margin: 0;
    padding: 0;
    border: 0;
    background: none;
    color: inherit;
    font: inherit;
    white-space: nowrap;
}

a {
    color: inherit;
    text-decoration: none;
    white-space: nowrap;
}

svg {
    display: block;
    flex: none;
}

.defs {
    position: absolute;
    width: 0;
    height: 0;
}

.caret {
    flex: none;
    width: 6px;
    height: 3px;
    background: #dcdcdc;
    clip-path: polygon(0 0, 100% 0, 50% 100%);
}

.caret.wide {
    width: 8px;
    height: 4px;
}

.caret.gray {
    background: #666;
}

.caret.up {
    background: #666;
    clip-path: polygon(50% 0, 100% 100%, 0 100%);
}

.slash {
    width: 8px;
    height: 17px;
    background: linear-gradient(113deg, transparent 46%, #4b5463 46%, #4b5463 56%, transparent 56%);
}

/* Title Bar */
.titlebar {
    display: flex;
    align-items: center;
    height: 32px;
    padding-bottom: 4px;
}

.titlebar button {
    display: flex;
    align-items: center;
}

.quick-access {
    display: flex;
    align-items: center;
    gap: 8px;
    padding-left: 15px;
}

.app-button {
    gap: 4px;
    margin-right: 4px;
}

.with-caret {
    gap: 6px;
}

.share {
    gap: 4px;
    color: #73bdf5;
    font-size: 12px;
}

.dim .caret {
    background: #858a92;
}

.app-title {
    flex: 1;
    display: flex;
    justify-content: center;
    gap: 12px;
    margin: 0;
    font-size: 11px;
    font-weight: normal;
    white-space: nowrap;
}

.info-center {
    display: flex;
    align-items: center;
    gap: 8px;
}

.caret-right {
    width: 4px;
    height: 8px;
    margin-right: -1px;
    background: #dcdcdc;
    clip-path: polygon(0 0, 100% 50%, 0 100%);
}

.info-center input {
    width: 178px;
    height: 20px;
    padding: 0 3px;
    border: 0;
    margin-right: -2px;
    background: #464f61;
    color: #f0f0f0;
    font: italic 11px "Noto Sans", "Open Sans", sans-serif;
}

.info-center input::placeholder {
    color: #b4b8bf;
}

.user {
    width: 112px;
    gap: 5px;
    margin-right: 2px;
}

.user .caret {
    margin-left: auto;
}

.divider {
    width: 1px;
    height: 18px;
    margin: 0 1px 0 2px;
    background: #464f61;
}

.window-buttons {
    display: flex;
    margin-left: 65px;
}

.window-buttons button {
    width: 46px;
    height: 28px;
    justify-content: center;
}

/* Ribbon Tabs */
.ribbon-tabs {
    display: flex;
    gap: 1px;
    height: 20px;
    padding-left: 4px;
    line-height: 20px;
    color: #b4b8bf;
}

.ribbon-tabs a {
    padding: 0 10px;
}

.ribbon-tabs .active {
    background: #3b4453;
    color: #fff;
}

.ribbon-tabs button {
    display: flex;
    align-items: center;
    gap: 3px;
    padding-left: 20px;
}

/* Ribbon Panels */
.ribbon {
    display: flex;
    height: 99px;
    margin: 0 1px;
    background: #3b4453;
}

.panel {
    display: flex;
    flex-direction: column;
    flex: none;
    border-right: 1px solid #222933;
}

.panel-body {
    display: grid;
    height: 77px;
    padding-top: 5px;
}

.draw {
    width: 225px;
}

.draw .panel-body {
    grid-template-columns: 44px 42px 58px 34px auto;
}

.modify {
    width: 250px;
}

.modify .panel-body {
    grid-template-columns: 72px 69px 75px auto;
}

.annotation {
    width: 189px;
}

.annotation .panel-body {
    grid-template-columns: 47px 58px auto;
}

.layers {
    width: 273px;
}

.layers .panel-body {
    grid-template-columns: 62px auto;
}

.block {
    width: 201px;
}

.block .panel-body {
    grid-template-columns: 42px 36px auto;
}

.properties {
    width: 265px;
}

.properties .panel-body {
    grid-template-columns: 63px auto;
}

.groups {
    width: 69px;
}

.groups .panel-body {
    grid-template-columns: 42px 24px;
}

.utilities {
    width: 97px;
}

.utilities .panel-body {
    grid-template-columns: 71px 24px;
}

.clipboard {
    width: 91px;
}

.clipboard .panel-body {
    grid-template-columns: 55px auto;
}

.view {
    width: 62px;
    border-right: 0;
}

.big {
    display: flex;
    flex-direction: column;
    align-items: center;
    min-width: 0;
    padding-top: 3px;
    line-height: 15px;
}

.big svg {
    margin-bottom: 3px;
}

.big svg[height="34"] {
    margin-top: -2px;
}

.big .caret {
    margin-top: 2px;
}

.rows {
    display: grid;
    grid-template-rows: repeat(3, 24px);
    padding-left: 7px;
}

.rows button {
    display: flex;
    align-items: center;
    gap: 5px;
}

.rows button .caret {
    margin-left: 3px;
}

.draw .rows {
    padding-left: 8px;
}

.layers .rows,
.properties .rows,
.groups .rows,
.utilities .rows {
    padding-left: 0;
}

.clipboard .rows {
    padding-left: 2px;
}

.draw .rows .caret,
.clipboard .rows .caret {
    margin-left: 1px;
}

.groups .rows,
.utilities .rows {
    justify-items: center;
}

.groups .rows button {
    width: 24px;
    justify-content: center;
}

.groups .rows .pressed {
    height: 22px;
    align-self: center;
    border: 1px solid #73bdf5;
    background: #465a74;
}

.icon-row {
    display: flex;
}

.icon-row button {
    padding-left: 4px;
    padding-right: 4px;
}

.prop-row {
    display: grid;
    grid-template-columns: 17px auto;
    align-items: center;
    gap: 1px;
}

.combo {
    display: flex;
    align-items: center;
    align-self: center;
    gap: 4px;
    height: 22px;
    margin-right: 1px;
    padding: 0 2px 0 5px;
    border: 1px solid #2c3440;
    background: #4c586b;
}

.combo select {
    flex: 1;
    min-width: 0;
    appearance: none;
    border: 0;
    padding: 0 0 0 2px;
    background: none;
    color: #f0f0f0;
    font: inherit;
}

.swatch {
    flex: none;
    width: 15px;
    height: 15px;
    border: 1px solid #dcdcdc;
    background: #000;
}

.sample {
    width: 64px;
    height: 1px;
    margin-right: -3px;
    background: #f0f0f0;
}

.panel-title {
    display: flex;
    align-items: center;
    justify-content: center;
    gap: 6px;
    height: 22px;
}

.title-row {
    display: grid;
    grid-template-columns: auto 10px;
    align-items: center;
}

.view .title-row {
    grid-template-columns: 50px 10px;
}

/* File Tabs */
.file-tabs {
    display: flex;
    align-items: center;
    height: 31px;
    padding: 3px 0 0 16px;
    border-bottom: 4px solid #3b4453;
}

.file-tabs .slash {
    margin: 0 8px 0 10px;
}

.file-tabs a {
    display: flex;
    align-items: center;
    height: 24px;
}

.file-tabs .active {
    gap: 11px;
    margin-left: 8px;
    padding: 0 13px 0 15px;
    background: #3b4453;
    clip-path: polygon(9px 0, 100% 0, calc(100% - 9px) 100%, 0 100%);
    font-weight: bold;
}

.add {
    margin-left: 9px;
}

/* Drawing Area */
.canvas {
    position: relative;
    flex: 1;
    min-height: 0;
    background: #fff;
    color: #000;
}

.drawing {
    position: absolute;
    width: 100%;
    height: 100%;
}

.marker {
    font: bold 29px Roboto, "Liberation Sans", sans-serif;
}

.view-label {
    position: absolute;
    top: 7px;
    left: 3px;
    font-size: 12px;
}

.doc-buttons {
    position: absolute;
    top: 8px;
    right: 10px;
    display: flex;
    gap: 6px;
}

.viewcube {
    position: absolute;
    top: 40px;
    right: 17px;
    overflow: visible;
}

.cube-face {
    fill: #8d9297;
    font: bold 12px Roboto, "Liberation Sans", sans-serif;
    text-anchor: middle;
}

.compass {
    fill: #e2e2e2;
    stroke: #aaa;
    font: bold 22px "Liberation Sans", sans-serif;
    text-anchor: middle;
}

.wcs {
    position: absolute;
    top: 193px;
    right: 59px;
    display: flex;
    align-items: center;
    gap: 5px;
    height: 17px;
    padding: 0 4px;
    border-radius: 4px;
    background: #ececf6;
    color: #8a8a8a;
    font: 11px Roboto, "Liberation Sans", sans-serif;
}

.navbar {
    position: absolute;
    top: 234px;
    right: 2px;
    border: 2px solid #ccc;
    border-radius: 6px;
    background: #f4f4f4;
}

.dynamic-input {
    position: absolute;
    top: 799px;
    left: 1318px;
    display: flex;
    align-items: flex-start;
    gap: 3px;
    white-space: nowrap;
}

.dynamic-input label,
.dynamic-input output {
    min-width: 65px;
    height: 20px;
    padding: 2px 4px 0;
    border: 1px solid #000;
    background: #969696;
}

.dynamic-input label {
    min-width: 144px;
    height: 23px;
}

.dynamic-input .angle {
    min-width: 71px;
}

.dynamic-input .selected {
    background: #fff;
}

.dynamic-input mark {
    background: #0a78d7;
    color: #fff;
}

/* Command Line */
.command-line {
    position: absolute;
    bottom: 0;
    left: 145px;
    right: 145px;
    display: flex;
    align-items: center;
    height: 27px;
    border: 1px solid #222933;
    border-radius: 3px 3px 0 0;
    background: #fff;
    font: 12px/16px "Liberation Mono", monospace;
}

.command-tools {
    display: flex;
    align-items: center;
    gap: 7px;
    width: 57px;
    height: 100%;
    padding-left: 3px;
    background: #2b3340;
}

.command-tools button:last-child {
    margin-left: 3px;
}

.recent {
    display: flex;
    align-items: center;
    gap: 2px;
    padding-left: 2px;
}

.command-line p {
    flex: 1;
    display: flex;
    gap: 4px;
    margin: 0;
    padding: 2px 0 0 6px;
}

.history {
    padding-right: 3px;
}

.history .caret {
    display: block;
}

/* Status Bar */
.statusbar {
    display: flex;
    justify-content: space-between;
    height: 33px;
    border-top: 4px solid #3b4453;
}

.layout-tabs {
    display: flex;
    align-items: center;
    height: 24px;
    padding-left: 16px;
}

.layout-tabs a {
    padding: 0 9px 0 7px;
}

.layout-tabs .active {
    height: 24px;
    margin-left: 9px;
    padding: 0 17px 0 18px;
    background: #3b4453;
    line-height: 24px;
    clip-path: polygon(9px 0, 100% 0, calc(100% - 9px) 100%, 0 100%);
    font-weight: bold;
}

.layout-tabs .add + .slash {
    margin-left: 9px;
}

.status-tools {
    display: flex;
    gap: 3px;
    padding: 2px 2px 0 0;
}

.group {
    display: flex;
    align-items: center;
    justify-content: center;
    height: 24px;
    background: #3b4453;
}

.group button {
    display: flex;
    justify-content: center;
    width: 24px;
}

.group > .caret {
    margin: 0 4px;
}

.group.joined {
    margin-left: -2px;
}

.group.space {
    width: 47px;
}

.group .on {
    height: 22px;
    align-items: center;
    background: #5a8cc4;
}

.group .scale {
    width: 18px;
}

.group.plot {
    width: 57px;
    gap: 4px;
}
```
